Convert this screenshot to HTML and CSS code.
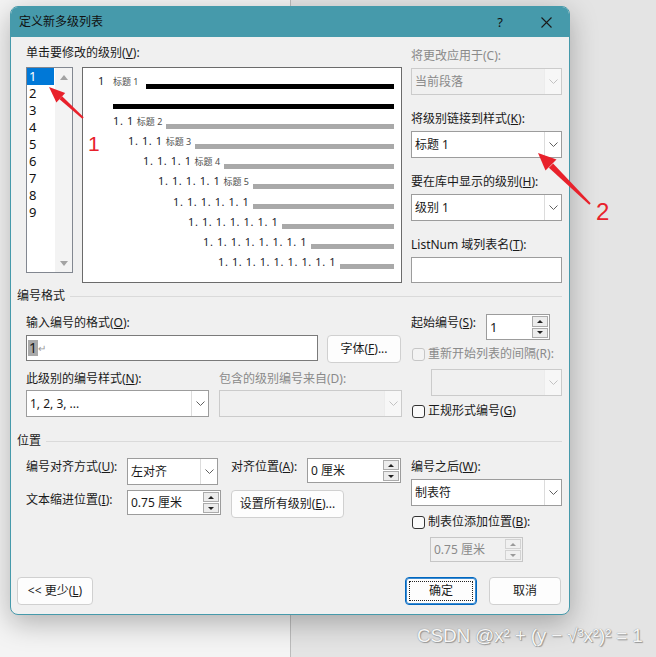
FILE: index.html
```html
<!DOCTYPE html>
<html lang="zh-CN">
  <head>
    <meta charset="UTF-8" />
    <meta name="viewport" content="width=device-width, initial-scale=1.0" />
    <title>定义新多级列表</title>
    <link rel="stylesheet" href="styles.css">
  </head>
  <body>
    <div class="dialog">
      <div class="titlebar">
        <span class="title">定义新多级列表</span>
        <span class="help">?</span>
        <span class="close">
          <svg width="11" height="11" viewBox="0 0 11 11"><path d="M0.5 0.5L10.5 10.5M10.5 0.5L0.5 10.5" stroke="#1a1a1a" stroke-width="1.1" fill="none"/></svg>
        </span>
      </div>

      <div class="content">
        <!-- level list + preview -->
        <div class="section top">
          <div class="left">
            <div class="label">单击要修改的级别(<u>V</u>):</div>
            <div class="level-row">
              <div class="levels">
                <div class="level-items">
                  <div class="item selected">1</div>
                  <div class="item">2</div>
                  <div class="item">3</div>
                  <div class="item">4</div>
                  <div class="item">5</div>
                  <div class="item">6</div>
                  <div class="item">7</div>
                  <div class="item">8</div>
                  <div class="item">9</div>
                </div>
                <div class="vscroll">
                  <span class="tri up"></span>
                  <span class="tri down"></span>
                </div>
              </div>
              <div class="preview">
                <div class="pv-row lv1"><span class="pv-text"><span class="n1">1</span><small>标题 1</small></span><span class="bar dark"></span></div>
                <div class="pv-row lv2"><span class="bar dark"></span></div>
                <div class="pv-row lv2"><span class="pv-text">1. 1<small>标题 2</small></span><span class="bar"></span></div>
                <div class="pv-row lv3"><span class="pv-text">1. 1. 1<small>标题 3</small></span><span class="bar"></span></div>
                <div class="pv-row lv4"><span class="pv-text">1. 1. 1. 1<small>标题 4</small></span><span class="bar"></span></div>
                <div class="pv-row lv5"><span class="pv-text">1. 1. 1. 1. 1<small>标题 5</small></span><span class="bar"></span></div>
                <div class="pv-row lv6"><span class="pv-text">1. 1. 1. 1. 1. 1</span><span class="bar"></span></div>
                <div class="pv-row lv7"><span class="pv-text">1. 1. 1. 1. 1. 1. 1</span><span class="bar"></span></div>
                <div class="pv-row lv8"><span class="pv-text">1. 1. 1. 1. 1. 1. 1. 1</span><span class="bar"></span></div>
                <div class="pv-row lv9"><span class="pv-text">1. 1. 1. 1. 1. 1. 1. 1. 1</span><span class="bar"></span></div>
              </div>
            </div>
          </div>

          <div class="right side">
            <div class="label disabled">将更改应用于(C):</div>
            <div class="combo disabled"><span class="val">当前段落</span><span class="drop"><svg width="9" height="5" viewBox="0 0 9 5"><polyline points="0.5,0.5 4.5,4.5 8.5,0.5" fill="none" stroke="#c2c2c2"/></svg></span></div>
            <div class="label">将级别链接到样式(<u>K</u>):</div>
            <div class="combo"><span class="val">标题 1</span><span class="drop"><svg width="9" height="5" viewBox="0 0 9 5"><polyline points="0.5,0.5 4.5,4.5 8.5,0.5" fill="none" stroke="#606060"/></svg></span></div>
            <div class="label">要在库中显示的级别(<u>H</u>):</div>
            <div class="combo"><span class="val">级别 1</span><span class="drop"><svg width="9" height="5" viewBox="0 0 9 5"><polyline points="0.5,0.5 4.5,4.5 8.5,0.5" fill="none" stroke="#606060"/></svg></span></div>
            <div class="label">ListNum 域列表名(<u>T</u>):</div>
            <div class="textbox"></div>
          </div>
        </div>

        <div class="group first"><span>编号格式</span><i></i></div>

        <div class="section fmt">
          <div class="left">
            <div class="label fmt-label">输入编号的格式(<u>O</u>):</div>
            <div class="input-row">
              <div class="textbox fmt-box"><span class="sel">1</span><span class="para">↵</span></div>
              <div class="btn font-btn">字体(<u>F</u>)...</div>
            </div>
            <div class="pair">
              <div class="col">
                <div class="label">此级别的编号样式(<u>N</u>):</div>
                <div class="combo"><span class="val">1, 2, 3, ...</span><span class="drop"><svg width="9" height="5" viewBox="0 0 9 5"><polyline points="0.5,0.5 4.5,4.5 8.5,0.5" fill="none" stroke="#606060"/></svg></span></div>
              </div>
              <div class="col">
                <div class="label disabled">包含的级别编号来自(D):</div>
                <div class="combo disabled"><span class="val"></span><span class="drop"><svg width="9" height="5" viewBox="0 0 9 5"><polyline points="0.5,0.5 4.5,4.5 8.5,0.5" fill="none" stroke="#c2c2c2"/></svg></span></div>
              </div>
            </div>
          </div>

          <div class="right">
            <div class="spin-row">
              <span class="label">起始编号(<u>S</u>):</span>
              <div class="spin start">
                <span class="val">1</span>
                <span class="arrows"><span><i class="mini up"></i></span><span><i class="mini down"></i></span></span>
              </div>
            </div>
            <div class="check disabled restart-check"><span class="box"></span><span>重新开始列表的间隔(R):</span></div>
            <div class="combo disabled restart"><span class="val"></span><span class="drop"><svg width="9" height="5" viewBox="0 0 9 5"><polyline points="0.5,0.5 4.5,4.5 8.5,0.5" fill="none" stroke="#c2c2c2"/></svg></span></div>
            <div class="check legal-check"><span class="box"></span><span>正规形式编号(<u>G</u>)</span></div>
          </div>
        </div>

        <div class="group second"><span>位置</span><i></i></div>

        <div class="section pos">
          <div class="left">
            <div class="pos-row row-a">
              <span class="label">编号对齐方式(<u>U</u>):</span>
              <div class="combo align"><span class="val">左对齐</span><span class="drop"><svg width="9" height="5" viewBox="0 0 9 5"><polyline points="0.5,0.5 4.5,4.5 8.5,0.5" fill="none" stroke="#606060"/></svg></span></div>
              <span class="label narrow">对齐位置(<u>A</u>):</span>
              <div class="spin pos-spin">
                <span class="val">0 厘米</span>
                <span class="arrows"><span><i class="mini up"></i></span><span><i class="mini down"></i></span></span>
              </div>
            </div>
            <div class="pos-row row-b">
              <span class="label">文本缩进位置(<u>I</u>):</span>
              <div class="spin pos-spin">
                <span class="val">0.75 厘米</span>
                <span class="arrows"><span><i class="mini up"></i></span><span><i class="mini down"></i></span></span>
              </div>
              <div class="btn all-btn">设置所有级别(<u>E</u>)...</div>
            </div>
          </div>

          <div class="right">
            <div class="label after-label">编号之后(<u>W</u>):</div>
            <div class="combo"><span class="val">制表符</span><span class="drop"><svg width="9" height="5" viewBox="0 0 9 5"><polyline points="0.5,0.5 4.5,4.5 8.5,0.5" fill="none" stroke="#606060"/></svg></span></div>
            <div class="check tab-check"><span class="box"></span><span>制表位添加位置(<u>B</u>):</span></div>
            <div class="spin disabled tab-spin">
              <span class="val">0.75 厘米</span>
              <span class="arrows"><span><i class="mini up"></i></span><span><i class="mini down"></i></span></span>
            </div>
          </div>
        </div>

        <div class="footer">
          <div class="btn less">&lt;&lt; 更少(<u>L</u>)</div>
          <div class="btn ok">确定</div>
          <div class="btn cancel">取消</div>
        </div>
      </div>
    </div>

    <svg class="marks" width="656" height="657" viewBox="0 0 656 657">
      <g fill="#e8212b">
        <polygon points="49,87 65.2,93 56.4,102.6"/>
        <polygon points="62.1,96.3 59.5,99.3 82.3,118.7 83.7,117.3"/>
        <polygon points="538,153 556.5,159.5 545.5,170.5"/>
        <polygon points="553.1,163.5 548.9,167.7 589.3,204.7 590.7,203.3"/>
      </g>
      <text x="88" y="151" class="mark-num one">1</text>
      <text x="596" y="220" class="mark-num two">2</text>
    </svg>

    <div class="watermark">CSDN @x² + (y − √³x²)² = 1</div>
  </body>
</html>
```

FILE: styles.css
```css
* {
  box-sizing: border-box;
}

body {
  margin: 0;
  padding-top: 6px;
  width: 656px;
  height: 657px;
  overflow: hidden;
  position: relative;
  font-family: "Noto Sans", "Noto Sans CJK SC", sans-serif;
  font-size: 12px;
  line-height: 16px;
  color: #1a1a1a;
  background: linear-gradient(to right, #f4f4f4 0, #f4f4f4 290px, #bcbcbc 290px, #bcbcbc 291px, #e4e4e4 291px);
}

u {
  text-underline-offset: 1px;
}

/* window */
.dialog {
  margin-left: 10px;
  width: 560px;
  height: 609px;
  border: 1px solid #469aab;
  border-radius: 8px;
  background: #f0f0f0;
  box-shadow: 0 8px 28px rgba(0, 0, 0, 0.28);
  overflow: hidden;
}

.titlebar {
  height: 30px;
  background: #469aab;
  display: flex;
  align-items: center;
  padding: 0 17px 0 8px;
  color: #111;
}

.title {
  flex: 1;
}

.help {
  font-size: 13px;
  margin-right: 38px;
}

.close svg {
  display: block;
}

.content {
  height: 577px;
  display: flex;
  flex-direction: column;
  padding: 8px 7px 9px 15px;
}

.section {
  display: flex;
  gap: 9px;
}

.left {
  width: 376px;
}

.right {
  width: 151px;
}

.label {
  display: block;
  white-space: nowrap;
}

.disabled,
.label.disabled {
  color: #8a8a8a;
}

/* level list */
.level-row {
  display: flex;
  gap: 9px;
  margin-top: 6px;
  align-items: flex-start;
}

.levels {
  width: 47px;
  height: 206px;
  border: 1px solid #828790;
  background: #fff;
  display: flex;
}

.level-items {
  width: 28px;
}

.item {
  width: 27px;
  height: 17px;
  line-height: 17px;
  font-size: 13px;
  padding-left: 2px;
  color: #111;
}

.item.selected {
  background: #0078d7;
  color: #fff;
}

.vscroll {
  width: 17px;
  background: #f3f3f3;
  display: flex;
  flex-direction: column;
  justify-content: space-between;
  align-items: center;
  padding: 7px 0 6px;
}

.tri {
  width: 0;
  height: 0;
  border-left: 4px solid transparent;
  border-right: 4px solid transparent;
}

.tri.up {
  border-bottom: 5px solid #a3a3a3;
}

.tri.down {
  border-top: 5px solid #a3a3a3;
}

/* preview */
.preview {
  width: 320px;
  height: 216px;
  border: 1px solid #6b6b6b;
  background: #fff;
  padding: 8px 7px 0 0;
}

.pv-row {
  display: flex;
  align-items: flex-end;
  height: 20px;
}

.pv-text {
  font-size: 11px;
  line-height: 13px;
  letter-spacing: 0.6px;
  margin-bottom: 8px;
  margin-right: 4px;
  white-space: nowrap;
  color: #1c1c2c;
}

.pv-text small {
  font-family: "Noto Sans", "Noto Sans CJK SC", sans-serif;
  font-size: 9px;
  letter-spacing: 0;
  margin-left: 3px;
  color: #4c4c4c;
}

.n1 {
  display: inline-block;
  width: 15px;
}

.pv-text .n1 + small {
  margin-left: 0;
  margin-right: 3px;
}

.bar {
  flex: 1;
  height: 5px;
  margin-bottom: 7px;
  background: #a9a9a9;
}

.bar.dark {
  background: #000;
}

.lv1 { padding-left: 15px; }
.lv2 { padding-left: 30px; }
.lv3 { padding-left: 45px; }
.lv4 { padding-left: 60px; }
.lv5 { padding-left: 75px; }
.lv6 { padding-left: 90px; }
.lv7 { padding-left: 105px; }
.lv8 { padding-left: 120px; }
.lv9 { padding-left: 135px; }

/* form controls */
.side {
  padding-top: 3px;
}

.side .label {
  margin-top: 16px;
}

.side .label:first-child {
  margin-top: 0;
}

.combo {
  display: flex;
  height: 27px;
  margin-top: 4px;
  border: 1px solid #9c9c9c;
  background: #fff;
}

.combo .val {
  flex: 1;
  padding-left: 3px;
  line-height: 25px;
  white-space: nowrap;
  overflow: hidden;
}

.combo .drop {
  width: 17px;
  border-left: 1px solid #dcdcdc;
  display: flex;
  align-items: center;
  justify-content: center;
  background: #fff;
}

.combo.disabled {
  border-color: #cbcbcb;
  background: #f0f0f0;
  color: #8a8a8a;
}

.combo.disabled .drop {
  background: #f7f7f7;
  border-left-color: #ececec;
}

.textbox {
  height: 26px;
  margin-top: 4px;
  border: 1px solid #9c9c9c;
  background: #fff;
}

.group {
  display: flex;
  align-items: center;
  gap: 5px;
  margin-left: -9px;
}

.group i {
  flex: 1;
  height: 1px;
  background: #dadada;
}

.group.first {
  margin-top: 5px;
}

.group.second {
  margin-top: 14px;
}

/* numbering format */
.fmt-label {
  margin-top: 11px;
}

.input-row {
  display: flex;
  gap: 9px;
  margin-top: 4px;
  align-items: flex-start;
}

.fmt-box {
  width: 292px;
  margin-top: 0;
  border-color: #7a7a7a;
  padding: 3px 0 0 1px;
  display: flex;
  align-items: center;
  height: 26px;
}

.fmt-box .sel {
  background: #a9a9a9;
  font-size: 14px;
  line-height: 16px;
  padding: 0 1px;
  margin-top: -3px;
}

.fmt-box .para {
  color: #9a9a9a;
  font-size: 10px;
  margin-top: -4px;
}

.btn {
  position: relative;
  height: 28px;
  border: 1px solid #d0d0d0;
  border-radius: 4px;
  background: #fdfdfd;
  display: flex;
  align-items: center;
  justify-content: center;
  white-space: nowrap;
}

.font-btn {
  width: 74px;
}

.pair {
  display: flex;
  gap: 10px;
  margin-top: 8px;
}

.pair .col:first-child {
  width: 183px;
}

.pair .col:last-child {
  flex: 1;
}

.pair .combo {
  margin-top: 3px;
}

.spin-row {
  display: flex;
  align-items: flex-start;
  margin-top: 10px;
}

.spin-row .label {
  width: 75px;
  padding-top: 1px;
}

.spin {
  display: flex;
  height: 25px;
  border: 1px solid #9c9c9c;
  background: #fff;
}

.spin .val {
  flex: 1;
  padding-left: 3px;
  line-height: 23px;
  white-space: nowrap;
}

.spin .arrows {
  width: 16px;
  display: flex;
  flex-direction: column;
  margin: 1px 1px 1px 0;
}

.spin .arrows span {
  flex: 1;
  border: 1px solid #ababab;
  background: #ececec;
  display: flex;
  align-items: center;
  justify-content: center;
}

.spin .arrows span + span {
  margin-top: 1px;
}

.mini {
  width: 0;
  height: 0;
  border-left: 3px solid transparent;
  border-right: 3px solid transparent;
}

.mini.up {
  border-bottom: 3px solid #222;
}

.mini.down {
  border-top: 3px solid #222;
}

.spin.start {
  width: 64px;
  height: 26px;
}

.spin.start .val {
  line-height: 24px;
  font-size: 13px;
}

.spin.disabled {
  border-color: #c6c6c6;
  background: #f0f0f0;
}

.spin.disabled .arrows span {
  border-color: #d2d2d2;
  background: #f0f0f0;
}

.spin.disabled .mini.up {
  border-bottom-color: #9a9a9a;
}

.spin.disabled .mini.down {
  border-top-color: #9a9a9a;
}

.check {
  display: flex;
  align-items: center;
  gap: 3px;
  height: 16px;
  white-space: nowrap;
}

.check .box {
  width: 13px;
  height: 13px;
  margin-left: 1px;
  border: 1px solid #333;
  border-radius: 3px;
  background: #fafafa;
}

.check.disabled .box {
  border-color: #c6c6c6;
  background: #f3f3f3;
}

.restart-check {
  margin-top: 6px;
}

.combo.restart {
  margin-top: 7px;
  margin-left: 20px;
}

.legal-check {
  margin-top: 7px;
}

/* position */
.pos-row {
  display: flex;
  align-items: flex-start;
}

.pos-row .label {
  width: 101px;
  padding-top: 1px;
}

.row-a {
  margin-top: 9px;
}

.row-b {
  margin-top: 5px;
}

.row-b .label {
  padding-top: 2px;
}

.pos-row .label.narrow {
  width: 76px;
  margin-left: 13px;
}

.combo.align {
  width: 91px;
  margin-top: 0;
}

.pos-spin {
  width: 94px;
}

.all-btn {
  width: 113px;
  margin-left: 10px;
}

.after-label {
  margin-top: 10px;
}

.tab-check {
  margin-top: 8px;
}

.tab-spin {
  width: 93px;
  margin-top: 7px;
  margin-left: 19px;
}

/* buttons */
.footer {
  margin-top: auto;
  display: flex;
  gap: 12px;
  margin-left: -9px;
  margin-right: 1px;
}

.footer .less {
  width: 76px;
  margin-right: auto;
}

.footer .ok,
.footer .cancel {
  width: 72px;
}

.footer .ok {
  border-color: #0067c0;
  box-shadow: inset 0 0 0 1px #3d8bd0;
}

.footer .ok::after {
  content: "";
  position: absolute;
  left: 3px;
  top: 3px;
  right: 3px;
  bottom: 3px;
  border: 1px dotted #222;
}

/* overlays */
.marks {
  position: absolute;
  left: 0;
  top: 0;
  pointer-events: none;
}

.mark-num {
  font-family: "Liberation Sans", sans-serif;
  fill: #e8212b;
}

.mark-num.one {
  font-size: 21px;
}

.mark-num.two {
  font-size: 24px;
}

.watermark {
  position: absolute;
  left: 417px;
  top: 624px;
  font-family: "Liberation Sans", "DejaVu Sans", sans-serif;
  font-size: 19px;
  line-height: 24px;
  letter-spacing: -0.2px;
  color: #f6f6f6;
  text-shadow: 0 0 1px #777, 1px 1px 1px #999;
  white-space: nowrap;
}
```
